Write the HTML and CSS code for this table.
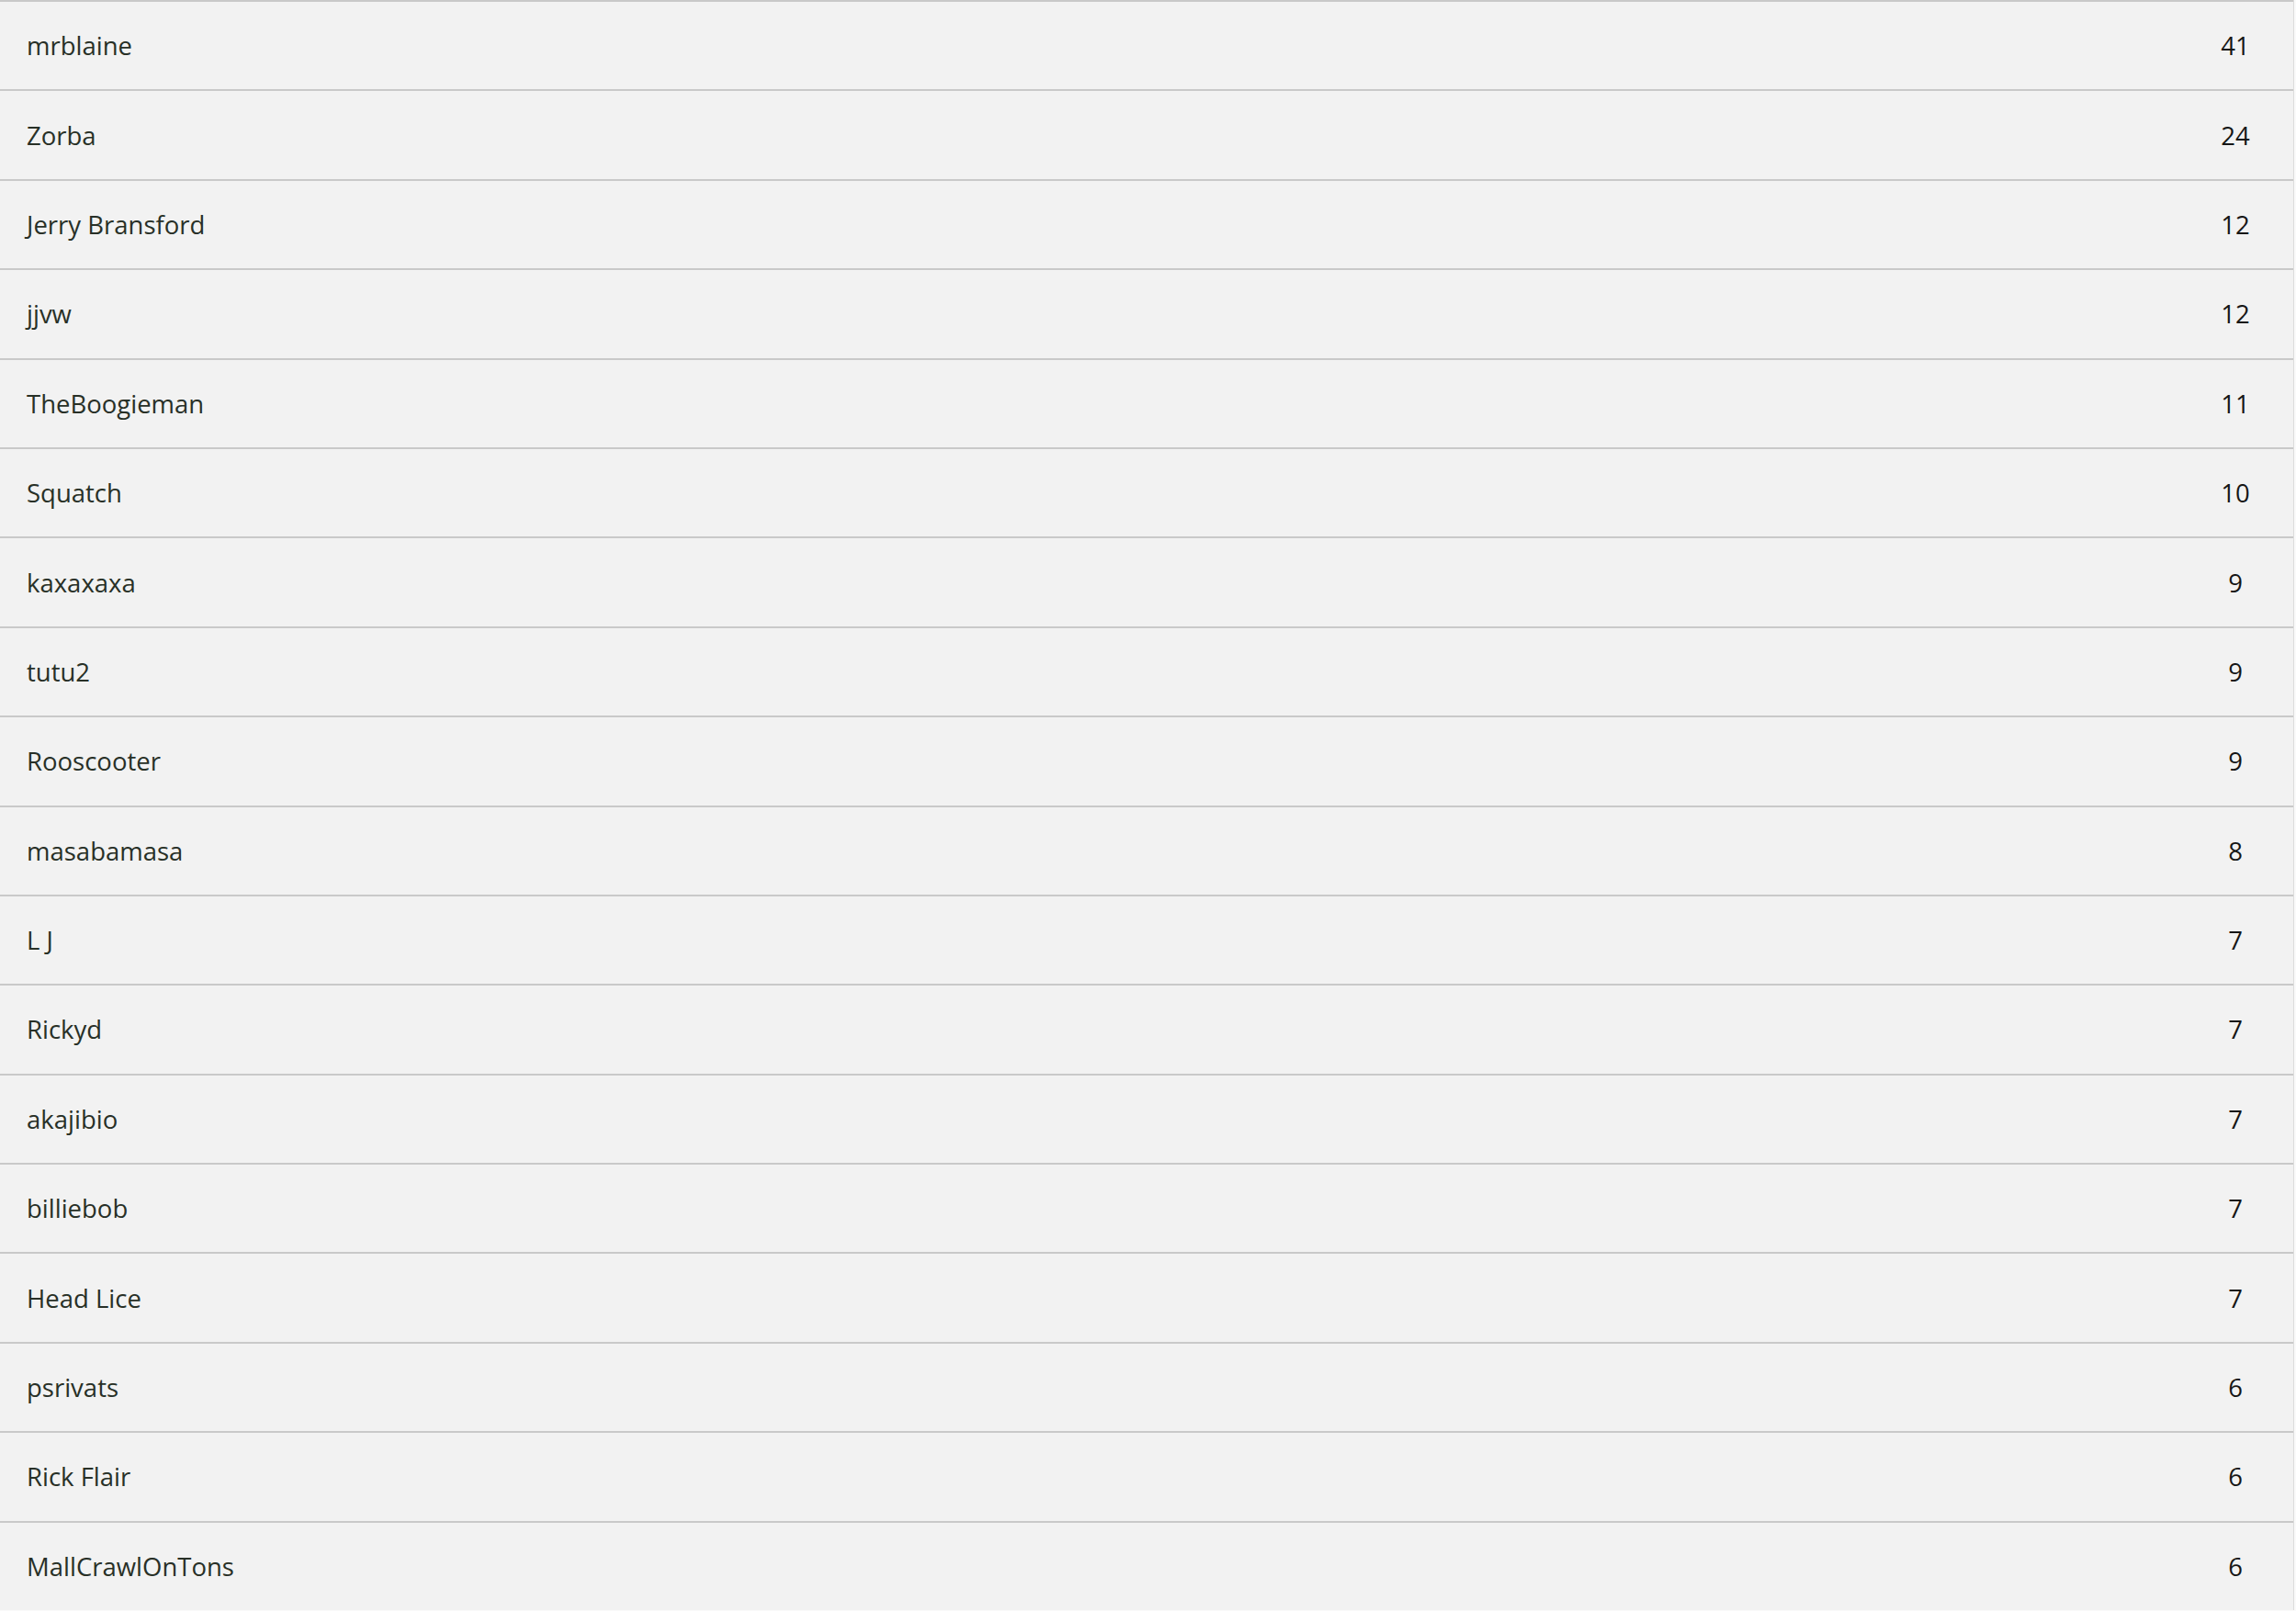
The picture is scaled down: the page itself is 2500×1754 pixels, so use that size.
FILE: index.html
```html
<!DOCTYPE html>
<html>
	<head>
		<meta charset="utf-8">
		<title>Leaderboard</title>
		<link rel="stylesheet" href="styles.css">
	</head>
	<body>
		<ul class="board">
			<li class="row"><span class="name">mrblaine</span><span class="count">41</span></li>
			<li class="row"><span class="name">Zorba</span><span class="count">24</span></li>
			<li class="row"><span class="name">Jerry Bransford</span><span class="count">12</span></li>
			<li class="row"><span class="name">jjvw</span><span class="count">12</span></li>
			<li class="row"><span class="name">TheBoogieman</span><span class="count">11</span></li>
			<li class="row"><span class="name">Squatch</span><span class="count">10</span></li>
			<li class="row"><span class="name">kaxaxaxa</span><span class="count">9</span></li>
			<li class="row"><span class="name">tutu2</span><span class="count">9</span></li>
			<li class="row"><span class="name">Rooscooter</span><span class="count">9</span></li>
			<li class="row"><span class="name">masabamasa</span><span class="count">8</span></li>
			<li class="row"><span class="name">L J</span><span class="count">7</span></li>
			<li class="row"><span class="name">Rickyd</span><span class="count">7</span></li>
			<li class="row"><span class="name">akajibio</span><span class="count">7</span></li>
			<li class="row"><span class="name">billiebob</span><span class="count">7</span></li>
			<li class="row"><span class="name">Head Lice</span><span class="count">7</span></li>
			<li class="row"><span class="name">psrivats</span><span class="count">6</span></li>
			<li class="row"><span class="name">Rick Flair</span><span class="count">6</span></li>
			<li class="row"><span class="name">MallCrawlOnTons</span><span class="count">6</span></li>
		</ul>
	</body>
</html>
```
FILE: styles.css
```css
*{
	margin:0;
	padding:0;
	box-sizing:border-box;
}
body{
	background-color:#fafafa;
	font-family:"Open Sans","Noto Sans",sans-serif;
	font-size:27.5px;
}
ul{
	list-style:none;
}
.board{
	width:2498px;
	background-color:#f2f2f2;
	border-right:1px solid #dcdcdc;
}
.board .row{
	height:97.4px;
	display:flex;
	align-items:center;
	border-top:2px solid #c9c9c9;
}
.board .name{
	flex:1;
	padding-left:29px;
	color:#283027;
}
.board .count{
	width:126px;
	text-align:center;
	color:#161616;
}
```
